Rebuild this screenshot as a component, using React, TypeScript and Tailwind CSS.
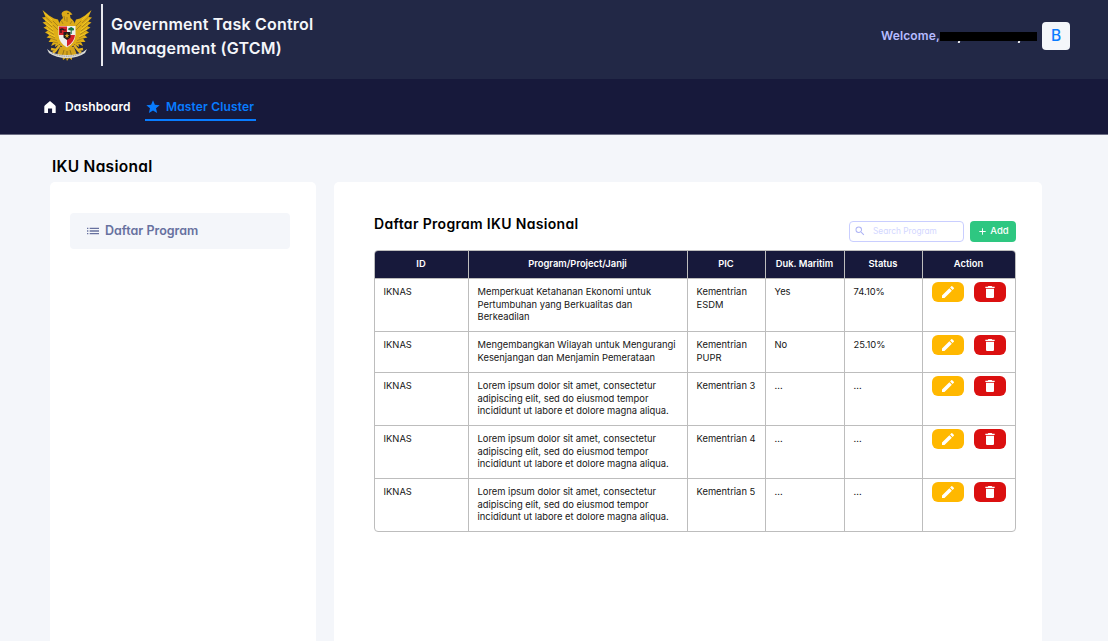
import React from "react";
import { MdStar, MdList, MdSearch, MdEdit, MdDelete, MdAdd } from "react-icons/md";

const heading = "font-[Inter,sans-serif] [font-feature-settings:'cv11']";

const lorem = ["Lorem ipsum dolor sit amet, consectetur", "adipiscing elit, sed do eiusmod tempor", "incididunt ut labore et dolore magna aliqua."];

const rows = [
  { text: ["Memperkuat Ketahanan Ekonomi untuk", "Pertumbuhan yang Berkualitas dan", "Berkeadilan"], pic: ["Kementrian", "ESDM"], duk: "Yes", status: "74.10%" },
  { text: ["Mengembangkan Wilayah untuk Mengurangi", "Kesenjangan dan Menjamin Pemerataan"], pic: ["Kementrian", "PUPR"], duk: "No", status: "25.10%" },
  { text: lorem, pic: ["Kementrian 3"], duk: "...", status: "..." },
  { text: lorem, pic: ["Kementrian 4"], duk: "...", status: "..." },
  { text: lorem, pic: ["Kementrian 5"], duk: "...", status: "..." },
];

const columns = ["ID", "Program/Project/Janji", "PIC", "Duk. Maritim", "Status", "Action"];
const grid = "grid grid-cols-[94px_219px_78px_79px_78px_1fr]";

function Lines({ lines }: { lines: string[] }) {
  return (
    <>
      {lines.map((l) => (
        <div key={l} className="whitespace-nowrap">{l}</div>
      ))}
    </>
  );
}

function Wing() {
  return (
    <g>
      <path d="M.5 1 L7 6.500 L12 9.500 L16 10.500 L18.500 17 L18 35 L13 38 L13.500 35 L9 37 L11 33 L6.500 33 L9 29.500 L4.500 28.500 L7.500 26 L3 23.500 L6 21.500 L1.500 18.500 L5 17 L.5 13.500 L4 12.500 L0 8.500 L3.500 8 Z" fill="#dfae16" />
      <path d="M3.500 8 L10 14 M4 12.500 L10 18 M5 17 L11 22 M6 21.500 L12 25.500 M7.500 26 L13 29 M9 29.500 L15 31.500 M11 33 L16 34 M11 12 L16 17 M11 16 L16 21" stroke="#8d6c1c" strokeWidth=".6" fill="none" />
      <path d="M2.500 4 L10 11 M3 10.500 L10 16.500 M4 15.500 L11 20.500 M5 20 L12 24 M6 24.500 L13 27.500" stroke="#f8d128" strokeWidth=".8" fill="none" />
    </g>
  );
}

function Emblem() {
  return (
    <svg viewBox="0 0 50 53" className="h-[53px] w-[50px] shrink-0">
      <Wing />
      <g transform="translate(50 0) scale(-1 1)"><Wing /></g>
      <path d="M18 38 L15 46 L20 46 L21 51 L24 49 L25 52 L27 49 L30 51 L30 46 L35 46 L32 38 Z" fill="#d4a41c" />
      <path d="M22 41 L20 48 M25 42 V50 M28 41 L30 48" stroke="#775a18" strokeWidth=".7" />
      <path d="M19.500 5 Q20 1.500 25 1.500 Q28 2 30.500 5.500 L28 6 L28.500 9 Q33 12 33.500 18 L32 36 L25 42 L18 36 L16.500 18 Q17 12 21 9 Z" fill="#ddab18" />
      <path d="M22 7 L23 12 M25 8 V13 M19.500 12 L21 15 M30 12 L28 15" stroke="#94701d" strokeWidth=".7" />
      <circle cx="26" cy="4.500" r=".7" fill="#332a1b" />
      <path d="M16.500 17 H33.500 V26 Q33 34 25 38.500 Q17 34 16.500 26 Z" fill="#efeeeb" />
      <path d="M17 17.500 H25 V26 H17 Z M25 26 H33 Q32.500 33 25 37.500 Z" fill="#d5202a" />
      <path d="M26.500 21 Q25.500 19 28 18.700 Q29 17.500 30.500 18.700 Q33 19.500 31.500 21.500 L29.700 21.500 V25 H28.700 V21.500 Z" fill="#187442" />
      <path d="M18 21 Q20 19 22 21 L24 21 M19 21 V24" stroke="#221819" strokeWidth="1.200" fill="none" />
      <path d="M21.500 23 H28.500 V28.500 L25 31 L21.500 28.500 Z" fill="#21191b" />
      <path d="M25 24 L25.700 26 H27.500 L26 27.200 L26.500 29 L25 28 L23.500 29 L24 27.200 L22.500 26 H24.300 Z" fill="#d8a824" />
      <path d="M18 36 L14 41 L9 40 M14 41 L11 44 M32 36 L36 41 L41 40 M36 41 L39 44" fill="none" stroke="#e1b020" strokeWidth="2.500" />
      <path d="M5 40 Q11 46 25 46 Q39 46 45 40 L43 44 Q36 49 25 49 Q14 49 7 44 Z" fill="#dcdcd6" />
      <path d="M10 44 Q25 50.500 40 44" stroke="#817970" strokeWidth=".8" strokeDasharray="1 .8" fill="none" />
    </svg>
  );
}

function HomeIcon() {
  return (
    <svg viewBox="0 0 16 16" className="size-4" fill="currentColor">
      <path d="M8 2 L13 6.200 Q13.700 6.900 13.700 7.600 V14 H10.100 V9.600 H6 V14 H2.300 V7.600 Q2.300 6.900 3 6.200 Z" />
    </svg>
  );
}

export default function App() {
  return (
    <div className={`flex h-[641px] w-[1108px] flex-col overflow-hidden bg-[#f4f6fa] ${heading}`}>
      <header className="flex h-[79px] shrink-0 bg-[#222846] pl-[42px] pr-[38px]">
        <div className="pt-[9px]"><Emblem /></div>
        <div className="ml-[9px] mt-[4px] h-[62px] w-[2px] bg-[#e8e9ee]" />
        <h1 className="ml-2 mt-[12px] whitespace-nowrap text-[16px] font-semibold leading-[24px] tracking-[0.2px] text-[#f4f6fa]">
          Government Task Control<br />Management (GTCM)
        </h1>
        <div className="ml-auto mt-[22px] flex h-7 items-center">
          <span className="text-[12px] font-semibold tracking-[0.15px] text-[#b7bcff]">Welcome,</span>
          <div className="relative h-[9px] w-[97px] bg-black">
            <span className="absolute left-[18px] top-[9px] h-[2px] w-[2px] -skew-x-12 bg-[#e8e9ee]" />
            <span className="absolute left-[78px] top-[9px] h-[2px] w-[2px] -skew-x-12 bg-[#e8e9ee]" />
          </div>
          <div className="ml-[5px] flex size-7 items-center justify-center rounded-[4px] bg-[#f4f6fa] text-[15.500px] font-medium text-[#0a7cff]">B</div>
        </div>
      </header>

      <nav className="flex h-[56px] shrink-0 border-b border-[#6c6e84] bg-[#17193b] pl-[42px] text-[12px] font-semibold tracking-[0.15px]">
        <div className="mt-[18px] flex h-5 w-[89px] items-center text-white">
          <HomeIcon />
          <span className="ml-[7px]">Dashboard</span>
        </div>
        <div className="ml-[14px] mt-[18px] flex h-[24px] w-[111px] border-b-2 border-[#087cff] text-[#087cff]">
          <div className="flex h-5 items-center">
            <MdStar className="size-4" />
            <span className="ml-[5px] whitespace-nowrap">Master Cluster</span>
          </div>
        </div>
      </nav>

      <h2 className="ml-[52px] mt-[19px] h-[28px] shrink-0 pt-px text-[15.500px] font-semibold leading-[24px] tracking-[0.28px] text-black">IKU Nasional</h2>

      <main className="flex min-h-0 flex-1 gap-[18px] pl-[50px]">
        <aside className="w-[266px] rounded-t-[5px] bg-white px-5 pt-[31px]">
          <div className="flex h-[36px] w-[220px] items-center rounded-[4px] bg-[#f4f6fa] pl-[15px] text-[#67719f]">
            <MdList className="size-4" />
            <span className="ml-1 text-[12.500px] font-semibold">Daftar Program</span>
          </div>
        </aside>

        <section className="w-[708px] rounded-t-[5px] bg-white pl-10 pr-[26px]">
          <div className="flex h-[67px]">
            <h3 className="mt-[30px] whitespace-nowrap text-[14px] font-semibold leading-[24px] tracking-[0.32px] text-black">Daftar Program IKU Nasional</h3>
            <div className="ml-auto mt-[38.500px] flex h-[21px] w-[115px] items-center rounded-[4px] border border-[#c9ceff] pl-[4px] text-[#d3d7ff]">
              <MdSearch className="size-[12px] text-[#aeb4f5]" />
              <span className="ml-[7px] whitespace-nowrap text-[8.300px]">Search Program</span>
            </div>
            <button className="ml-[6px] mt-[38.500px] flex h-[21px] w-[46px] items-center justify-center rounded-[4px] bg-[#2ec781] text-[9.500px] font-medium text-white">
              <MdAdd className="mr-[2px] size-[11px]" />Add
            </button>
          </div>

          <div className="mt-[1px] w-[642px] overflow-hidden rounded-[4px] border border-[#bdbdbd] font-[Inter,sans-serif] text-[9.400px] text-[#161616] [font-feature-settings:normal]">
            <div className={`${grid} h-[27px] bg-[#17193b] font-semibold text-white`}>
              {columns.map((c) => (
                <div key={c} className="flex items-center justify-center border-r border-[#bdbdbd] pr-px last:border-r-0">{c}</div>
              ))}
            </div>
            {rows.map((r, i) => (
              <div key={i} className={`${grid} border-t border-[#bdbdbd] leading-[12.600px] ${i === 1 ? "h-[41px]" : "h-[53px]"} [&>div]:border-r [&>div]:border-[#bdbdbd] [&>div]:pl-[8.500px] [&>div]:pt-[7px] [&>div:last-child]:border-r-0`}>
                <div>IKNAS</div>
                <div><Lines lines={r.text} /></div>
                <div><Lines lines={r.pic} /></div>
                <div>{r.duk}</div>
                <div>{r.status}</div>
                <div className="flex items-start gap-[10.500px] pl-[9px]! pt-[3px]!">
                  <button className="flex h-5 w-[31.500px] items-center justify-center rounded-[6px] bg-[#ffb800] text-white"><MdEdit className="size-4" /></button>
                  <button className="flex h-5 w-[31.500px] items-center justify-center rounded-[6px] bg-[#db1010] text-white"><MdDelete className="size-4" /></button>
                </div>
              </div>
            ))}
          </div>
        </section>
      </main>
    </div>
  );
}
